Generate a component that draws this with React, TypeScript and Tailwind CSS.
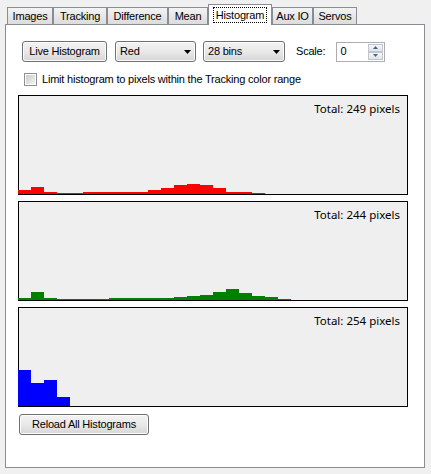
import React from "react";

const red = [4, 7, 2, 1, 1, 2, 2, 2, 2, 2, 4, 6, 9, 10, 9, 6, 2, 2, 1];
const green = [2, 8, 2, 1, 1, 1, 1, 2, 2, 2, 2, 2, 3, 4, 5, 8, 11, 7, 4, 3, 1];
const blue = [36, 23, 26, 9];

const tabs: { label: string; w: string; selected?: boolean }[] = [
  { label: "Images", w: "w-[46px]" },
  { label: "Tracking", w: "w-[54px]" },
  { label: "Difference", w: "w-[61px]" },
  { label: "Mean", w: "w-[40px]" },
  { label: "Histogram", w: "w-[64px]", selected: true },
  { label: "Aux IO", w: "w-[41px]" },
  { label: "Servos", w: "w-[44px]" },
];

function WinButton({ children, w }: { children: React.ReactNode; w: string }) {
  return (
    <div
      className={`${w} h-[21px] flex items-center justify-center rounded-[3px] border border-[#707070] bg-gradient-to-b from-[#f3f3f3] via-[#e9e9e9] to-[#d6d6d6] shadow-[inset_0_0_0_1px_#fcfcfc] text-black`}
    >
      {children}
    </div>
  );
}

function Combo({ text, w }: { text: string; w: string }) {
  return (
    <div
      className={`${w} h-[21px] flex items-center justify-between pl-[4px] pr-[4px] rounded-[3px] border border-[#707070] bg-gradient-to-b from-[#f3f3f3] via-[#e9e9e9] to-[#d6d6d6] shadow-[inset_0_0_0_1px_#fcfcfc] text-black`}
    >
      <span>{text}</span>
      <svg width="7" height="4" viewBox="0 0 7 4">
        <polygon points="0,0 7,0 3.5,4" fill="#000" />
      </svg>
    </div>
  );
}

function Chart({ total, data, color }: { total: number; data: number[]; color: string }) {
  return (
    <div className="w-[390px] h-[100px] border border-black bg-[#efefef] flex flex-col justify-between">
      <div className="flex justify-end pr-[7px] pt-[5px] font-['Noto_Sans',sans-serif] text-[11.5px] leading-[15px] tracking-normal text-black">
        Total: {total} pixels
      </div>
      <div className="flex items-end ml-[-1px]">
        {data.map((h, i) => (
          <div key={i} className="w-[13px]" style={{ height: h, background: color }} />
        ))}
      </div>
    </div>
  );
}

export default function App() {
  return (
    <div className="w-[431px] h-[474px] bg-[#f0f0f0] pt-[4px] font-['Liberation_Sans',Arial,sans-serif] text-[11px] leading-[13px] tracking-[-0.2px] text-black">
      <div className="relative z-10 flex items-end h-[20px] pl-[7px]">
        {tabs.map((t) =>
          t.selected ? (
            <div
              key={t.label}
              className={`${t.w} h-[21px] mb-[-1px] border border-b-0 border-[#898c95] bg-white flex items-start justify-center pt-[2px]`}
            >
              <span className="border border-dotted border-black px-[2px] h-[16px] flex items-center">
                {t.label}
              </span>
            </div>
          ) : (
            <div
              key={t.label}
              className={`${t.w} h-[17px] border border-b-0 border-[#898c95] bg-gradient-to-b from-[#f3f3f3] to-[#dcdcdc] flex items-center justify-center`}
            >
              {t.label}
            </div>
          )
        )}
      </div>
      <div className="ml-[5px] w-[420px] h-[444px] border border-[#898c95] bg-white flex flex-col items-start">
        <div className="mt-[16px] ml-[16px] flex items-center">
          <WinButton w="w-[85px]">Live Histogram</WinButton>
          <div className="ml-[8px]">
            <Combo text="Red" w="w-[81px]" />
          </div>
          <div className="ml-[7px]">
            <Combo text="28 bins" w="w-[82px]" />
          </div>
          <span className="ml-[11px]">Scale:</span>
          <div className="ml-[11px] w-[49px] h-[20px] border border-[#abadb3] bg-white flex items-center justify-between">
            <span className="pl-[3px]">0</span>
            <div className="flex flex-col mr-[1px]">
              <div className="w-[15px] h-[8px] border border-[#c2c6cc] bg-gradient-to-b from-[#f5f7fa] to-[#dfe4ea] flex items-center justify-center">
                <svg width="5" height="3" viewBox="0 0 5 3">
                  <polygon points="0,3 5,3 2.5,0" fill="#4d6185" />
                </svg>
              </div>
              <div className="w-[15px] h-[8px] border border-[#c2c6cc] bg-gradient-to-b from-[#f5f7fa] to-[#dfe4ea] flex items-center justify-center">
                <svg width="5" height="3" viewBox="0 0 5 3">
                  <polygon points="0,0 5,0 2.5,3" fill="#4d6185" />
                </svg>
              </div>
            </div>
          </div>
        </div>
        <div className="mt-[11px] ml-[18px] flex items-center h-[13px]">
          <div className="w-[13px] h-[13px] border border-[#8e8f8f] bg-white p-[1px]">
            <div className="w-full h-full bg-gradient-to-br from-[#cbcbcb] to-[#f4f4f4]" />
          </div>
          <span className="ml-[5px]">Limit histogram to pixels within the Tracking color range</span>
        </div>
        <div className="mt-[9px] ml-[12px] flex flex-col gap-[6px]">
          <Chart total={249} data={red} color="#ff0000" />
          <Chart total={244} data={green} color="#008000" />
          <Chart total={254} data={blue} color="#0000ff" />
        </div>
        <div className="mt-[7px] ml-[13px]">
          <WinButton w="w-[130px]">Reload All Histograms</WinButton>
        </div>
      </div>
    </div>
  );
}
